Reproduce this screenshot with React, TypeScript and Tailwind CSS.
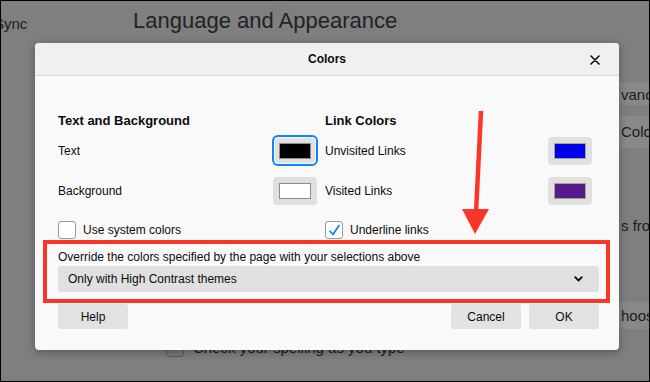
import { useState } from "react";

function Swatch({ color, focused, border }: { color: string; focused?: boolean; border: string }) {
  if (focused) {
    return (
      <div className="w-[46px] h-[31px] rounded-[6px] border-2 border-[#0a84ff] p-[1px]">
        <div className="w-full h-full rounded-[4px] bg-[#e0e0e0] flex items-center justify-center">
          <div className={`w-[32px] h-[16px] border ${border}`} style={{ backgroundColor: color }} />
        </div>
      </div>
    );
  }
  return (
    <div className="w-[44px] h-[28px] rounded-[4px] bg-[#e0e0e0] flex items-center justify-center">
      <div className={`w-[32px] h-[16px] border ${border}`} style={{ backgroundColor: color }} />
    </div>
  );
}

function Checkbox({ checked, label }: { checked?: boolean; label: string }) {
  return (
    <div className="flex items-center h-[18px]">
      <div className="w-[18px] h-[18px] rounded-[3px] border border-[#9a9a9a] bg-white flex items-center justify-center">
        {checked && (
          <svg width="13" height="13" viewBox="0 0 13 13" fill="none">
            <path d="M2 7.2 L5 10.5 L11 1.5" stroke="#0a84ff" strokeWidth="1.7" strokeLinecap="round" strokeLinejoin="round" />
          </svg>
        )}
      </div>
      <span className="ml-[7px]">{label}</span>
    </div>
  );
}

function Row({ label, children }: { label: string; children: React.ReactNode }) {
  return (
    <div className="flex items-center justify-between h-[31px]">
      <span>{label}</span>
      {children}
    </div>
  );
}

export default function App() {
  const [mode] = useState("Only with High Contrast themes");

  return (
    <div
      className="relative w-[650px] h-[382px] overflow-hidden bg-[#7f7f7f] border border-black text-[#1c1c1c]"
      style={{ fontFamily: "'Liberation Sans', Arial, sans-serif" }}
    >
      {/* page behind the dialog */}
      <div className="flex">
        <div className="w-[139px] -ml-[7px] pt-[12px] text-[15px]">Sync</div>
        <div className="pt-[3px] text-[22px] text-[#222]">Language and Appearance</div>
      </div>
      <div className="ml-[605px] w-[120px] flex flex-col text-[15px] text-[#1c1c1c]">
        <div className="mt-[45px] h-[23px] bg-[#888888] pl-[15px] leading-[25px]">vance</div>
        <div className="mt-[11px] h-[32px] bg-[#888888] pl-[15px] leading-[32px]">Colors</div>
        <div className="mt-[68px] h-[20px] pl-[15px] leading-[20px]">s from</div>
        <div className="mt-[66px] h-[27px] bg-[#888888] pl-[15px] leading-[27px]">hoose</div>
      </div>
      <div className="ml-[165px] mt-[8px] flex items-center text-[15px]">
        <div className="w-[18px] h-[18px] rounded-[3px] border border-[#5a5a5a] bg-[#7a7a7a]" />
        <span className="ml-[9px]">Check your spelling as you type</span>
      </div>

      {/* dialog */}
      <div className="absolute left-[34px] top-[42px] w-[584px] h-[307px] rounded-[4px] bg-[#f9f9f9] shadow-[0_2px_8px_rgba(0,0,0,0.35)] text-[12px] text-[#0c0c0d]">
        <div className="relative h-[33px] bg-[#f0f0f0] border-b border-[#d7d7d7] rounded-t-[4px] flex items-center justify-center">
          <span className="font-bold text-[12px]">Colors</span>
          <svg className="absolute right-[19px] top-[12px]" width="10" height="10" viewBox="0 0 10 10">
            <path d="M1 1 L9 9 M9 1 L1 9" stroke="#0c0c0d" strokeWidth="1.6" strokeLinecap="round" />
          </svg>
        </div>

        <div className="pl-[23px] pr-[20px]">
          <div className="flex mt-[36px] gap-[7px]">
            <div className="w-[260px]">
              <div className="h-[18px] text-[13px] font-bold leading-[18px]">Text and Background</div>
              <div className="mt-[5px]">
                <Row label="Text">
                  <Swatch color="#000000" focused border="border-[#8c8c8c]" />
                </Row>
              </div>
              <div className="mt-[9px]">
                <Row label="Background">
                  <div className="mr-[1px]">
                    <Swatch color="#ffffff" border="border-[#8c8c8c]" />
                  </div>
                </Row>
              </div>
              <div className="mt-[15px]">
                <Checkbox label="Use system colors" />
              </div>
            </div>
            <div className="w-[267px]">
              <div className="h-[18px] text-[13px] font-bold leading-[18px]">Link Colors</div>
              <div className="mt-[5px]">
                <Row label="Unvisited Links">
                  <Swatch color="#0000ee" border="border-[#aaa27a]" />
                </Row>
              </div>
              <div className="mt-[9px]">
                <Row label="Visited Links">
                  <Swatch color="#551a8b" border="border-[#aaa27a]" />
                </Row>
              </div>
              <div className="mt-[15px]">
                <Checkbox checked label="Underline links" />
              </div>
            </div>
          </div>

          <div className="mt-[10px] h-[16px] leading-[16px]">
            Override the colors specified by the page with your selections above
          </div>
          <div className="mt-[1px] h-[26px] rounded-[3px] bg-[#e0e0e0] flex items-center justify-between pl-[10px] pr-[16px]">
            <span>{mode}</span>
            <svg width="9" height="6" viewBox="0 0 9 6" fill="none">
              <path d="M1.2 1.2 L4.5 4.5 L7.8 1.2" stroke="#0c0c0d" strokeWidth="1.8" strokeLinecap="round" strokeLinejoin="round" />
            </svg>
          </div>

          <div className="mt-[12px] flex">
            <button className="w-[70px] h-[25px] rounded-[3px] bg-[#e2e2e2]">Help</button>
            <div className="flex-1" />
            <button className="w-[70px] h-[25px] rounded-[3px] bg-[#e2e2e2]">Cancel</button>
            <button className="ml-[8px] w-[70px] h-[25px] rounded-[3px] bg-[#e2e2e2]">OK</button>
          </div>
        </div>

        {/* annotation box */}
        <div className="absolute left-[8px] top-[197px] w-[567px] h-[63px] border-4 border-[#fa3629] pointer-events-none" />
      </div>

      {/* annotation arrow */}
      <svg className="absolute left-0 top-0 pointer-events-none" width="650" height="382">
        <line x1="480" y1="110" x2="475" y2="212" stroke="#fa3629" strokeWidth="4.5" />
        <polygon points="461,208 488,208 474,233" fill="#fa3629" />
      </svg>
    </div>
  );
}
